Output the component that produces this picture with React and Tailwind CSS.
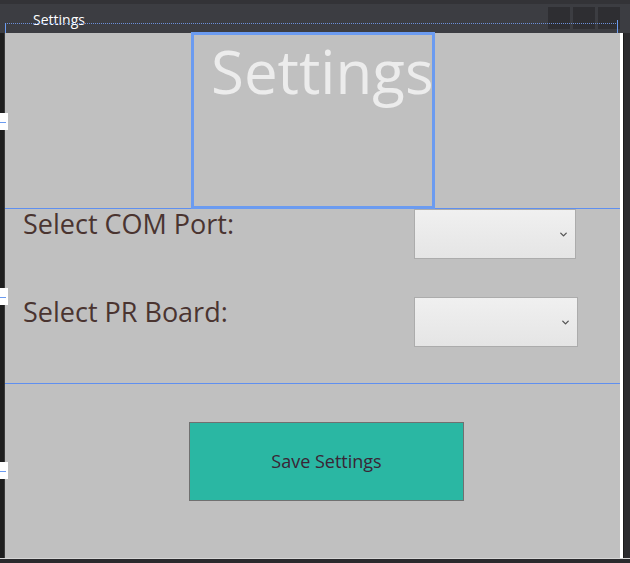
import { ChevronDown } from 'lucide-react'

const FONT = { fontFamily: '"Open Sans", "Noto Sans", sans-serif' }

function Combo({ width }) {
  return (
    <div className={`${width} h-[50px] border border-[#acacac] bg-gradient-to-b from-[#f0f0f0] to-[#e5e5e5] flex items-center justify-end pr-[6px]`}>
      <ChevronDown size={11} strokeWidth={3} className="text-[#555]" />
    </div>
  )
}

function Marker({ top }) {
  return (
    <div className={`absolute left-0 ${top} w-[8px] h-[17px] bg-white flex items-center`}>
      <div className="w-[6px] h-px bg-[#6b9bf0] mt-[2px]" />
    </div>
  )
}

export default function App() {
  return (
    <div className="w-[630px] h-[563px] bg-[#2a2a2d] relative overflow-hidden flex flex-col" style={FONT}>
      {/* title bar */}
      <div className="h-[33px] shrink-0 bg-[#3c3d42] border-t-[4px] border-[#333337] relative flex items-start">
        <span className="ml-[33px] mt-[7px] text-[14px] leading-[18px] text-white">Settings</span>
        <div className="absolute left-[5px] right-[12px] top-[19px] border-t border-dotted border-[#6b8fd8]" />
        <div className="absolute left-[5px] top-[19px] w-px h-[10px] bg-[#6b9bf0]" />
        <div className="absolute right-[12px] top-[16px] w-px h-[13px] bg-[#6b9bf0]" />
        <div className="ml-auto mr-[10px] mt-[3px] flex gap-[3px]">
          <div className="w-[22px] h-[22px] bg-[#2e2e32]" />
          <div className="w-[22px] h-[22px] bg-[#2e2e32]" />
          <div className="w-[22px] h-[22px] bg-[#2e2e32]" />
        </div>
      </div>

      {/* body */}
      <div className="flex h-[525px] shrink-0">
        <div className="w-[5px] bg-[#1e1e1e] border-r border-[#3a3a3a]" />
        <div className="w-[615px] bg-[#c0c0c0] relative flex flex-col">
          {/* row 1 */}
          <div className="h-[175px] shrink-0 relative">
            <div className="ml-[206px] text-[60px] leading-[76px] text-[#ececec]">Settings</div>
          </div>
          <div className="h-px shrink-0 bg-[#5f8fef]" />
          {/* row 2 */}
          <div className="h-[174px] shrink-0 flex flex-col">
            <div className="flex items-start">
              <span className="ml-[18px] mt-[-2px] text-[27px] leading-[34px] text-[#4a3430] w-[391px]">Select COM Port:</span>
              <Combo width="w-[162px]" />
            </div>
            <div className="flex items-start mt-[38px]">
              <span className="ml-[18px] mt-[-2px] text-[27px] leading-[34px] text-[#4a3430] w-[391px]">Select PR Board:</span>
              <Combo width="w-[164px]" />
            </div>
          </div>
          <div className="h-px shrink-0 bg-[#5f8fef]" />
          {/* row 3 */}
          <div className="flex-1 pt-[38px]">
            <button className="ml-[184px] w-[275px] h-[79px] bg-[#2ab7a3] border border-[#707070] text-[18px] text-[#3a2535]" style={FONT}>
              Save Settings
            </button>
          </div>
          {/* selection adorner */}
          <div className="absolute left-[186px] top-[-1px] w-[244px] h-[177px] border-[3px] border-[#6b9bf0]" />
        </div>
        <div className="w-[3px] bg-white" />
        <div className="w-[7px] bg-[#2a2a2d] border-l border-[#1a1a1a]" />
      </div>
      <div className="flex-1 bg-[#2a2a2d] border-t border-[#d6d6d6]" />

      <Marker top="top-[113px]" />
      <Marker top="top-[288px]" />
      <Marker top="top-[462px]" />
    </div>
  )
}
